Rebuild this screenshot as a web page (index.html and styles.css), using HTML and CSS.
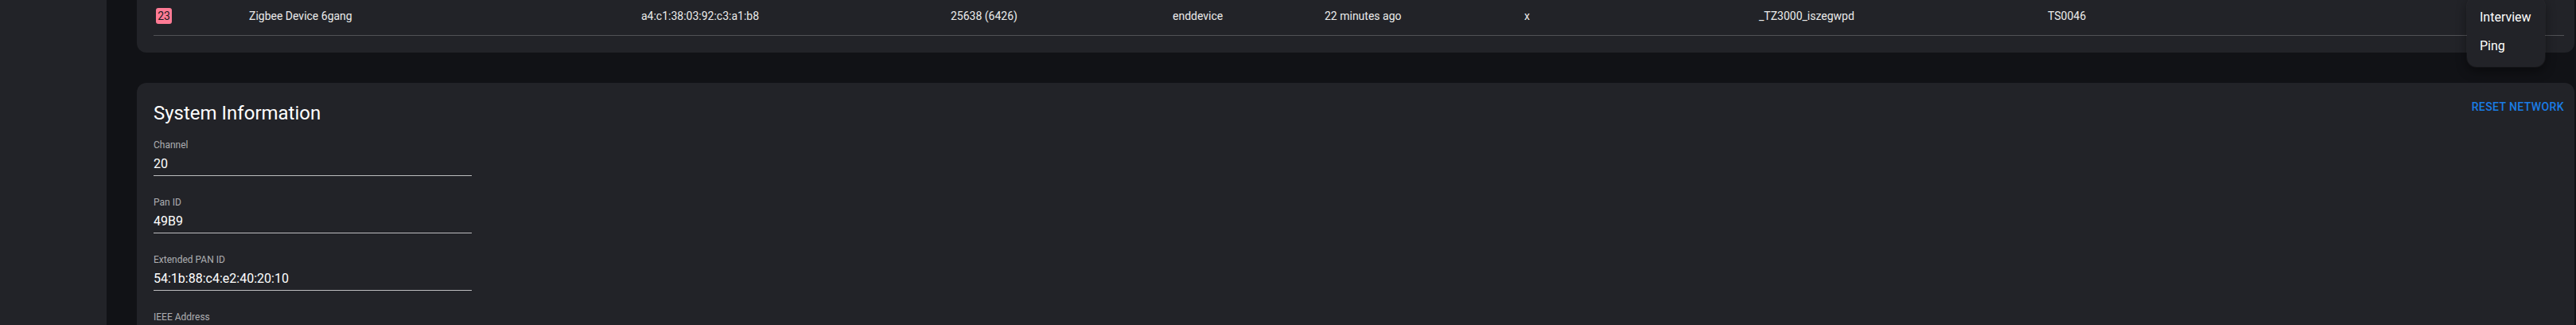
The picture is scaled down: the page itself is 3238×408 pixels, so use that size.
FILE: index.html
```html
<!DOCTYPE html>
<html lang="en">
<head>
<meta charset="utf-8">
<title>Zigbee</title>
<link rel="stylesheet" href="styles.css">
</head>
<body>
<div class="app">
  <aside class="sidebar"></aside>
  <main class="main">
    <section class="card card-devices">
      <div class="device-row">
        <div class="cell"><span class="badge">23</span></div>
        <div class="cell">Zigbee Device 6gang</div>
        <div class="cell">a4:c1:38:03:92:c3:a1:b8</div>
        <div class="cell">25638 (6426)</div>
        <div class="cell">enddevice</div>
        <div class="cell">22 minutes ago</div>
        <div class="cell">x</div>
        <div class="cell">_TZ3000_iszegwpd</div>
        <div class="cell">TS0046</div>
      </div>
    </section>
    <section class="card card-system">
      <div class="card-header">
        <h2 class="title">System Information</h2>
        <button class="text-button">Reset Network</button>
      </div>
      <div class="field">
        <label class="field-label">Channel</label>
        <div class="field-input">20</div>
      </div>
      <div class="field">
        <label class="field-label">Pan ID</label>
        <div class="field-input">49B9</div>
      </div>
      <div class="field">
        <label class="field-label">Extended PAN ID</label>
        <div class="field-input">54:1b:88:c4:e2:40:20:10</div>
      </div>
      <div class="field">
        <label class="field-label">IEEE Address</label>
        <div class="field-input">&nbsp;</div>
      </div>
    </section>
  </main>
</div>
<ul class="menu">
  <li class="menu-item">Interview</li>
  <li class="menu-item">Ping</li>
</ul>
</body>
</html>
```
FILE: styles.css
```css
* { box-sizing: border-box; }
html, body {
  margin: 0;
  padding: 0;
}
body {
  width: 3238px;
  height: 408px;
  overflow: hidden;
  background: #111216;
  font-family: Roboto, "Liberation Sans", Arial, sans-serif;
  color: #ffffff;
  position: relative;
}
.app {
  display: flex;
  height: 408px;
}
.sidebar {
  width: 134px;
  flex: none;
  background: #222328;
}
.main {
  flex: 1;
  padding: 0 2px 0 38px;
  margin-top: -4px;
  display: flex;
  flex-direction: column;
  gap: 38px;
}
.card {
  background: #222328;
  border-radius: 12px;
  padding: 0 13px 0 21px;
}
.card-devices {
  border-top-left-radius: 0;
  border-top-right-radius: 0;
  padding-bottom: 21px;
}
.device-row {
  display: grid;
  grid-template-columns: 117px 493px 389px 279px 191px 251px 295px 363px 1fr;
  align-items: center;
  height: 49px;
  padding-left: 3px;
  border-bottom: 1px solid #505155;
  font-size: 14px;
  line-height: 20px;
  color: #ebebeb;
}
.cell { white-space: nowrap; }
.badge {
  display: inline-flex;
  align-items: center;
  justify-content: center;
  width: 20px;
  height: 20px;
  border-radius: 3px;
  background: #ff7b95;
  color: #1b1b1f;
  font-size: 14px;
  line-height: 20px;
  vertical-align: top;
}
.card-system {
  padding-top: 12px;
  padding-bottom: 20px;
}
.card-header {
  display: flex;
  justify-content: space-between;
  align-items: flex-start;
}
.title {
  margin: 10px 0 0;
  font-size: 24px;
  font-weight: 400;
  line-height: 32px;
  color: #ffffff;
}
.text-button {
  background: none;
  border: 0;
  padding: 6px 8px;
  margin-right: -8px;
  font-family: Roboto, "Liberation Sans", Arial, sans-serif;
  font-size: 14px;
  font-weight: 500;
  line-height: 24px;
  letter-spacing: 0.4px;
  text-transform: uppercase;
  color: #1a7ce6;
}
.field {
  width: 400px;
  margin-top: 15px;
  border-bottom: 1px solid #bdbdbf;
}
.field + .field { margin-top: 24px; }
.field-label {
  display: block;
  padding-top: 1px;
  font-size: 12px;
  line-height: 16px;
  color: #aeafb2;
}
.field-input {
  padding: 4px 0 3px;
  font-size: 16px;
  line-height: 23px;
  color: #ffffff;
}
.menu {
  position: absolute;
  top: -4px;
  right: 39px;
  width: 98px;
  margin: 0;
  padding: 8px 0;
  list-style: none;
  background: #222328;
  border-radius: 12px;
  box-shadow: 0 0 0 1px rgba(255,255,255,0.04), 0 5px 14px rgba(0,0,0,0.45);
}
.menu-item {
  padding: 6px 16px;
  font-size: 16px;
  line-height: 24px;
  color: #ffffff;
  white-space: nowrap;
}
```
